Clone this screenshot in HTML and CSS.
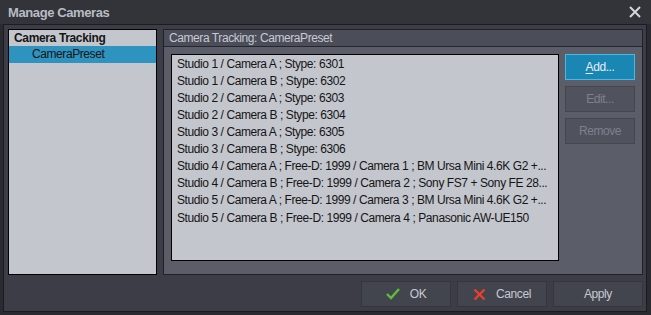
FILE: index.html
```html
<!DOCTYPE html>
<html>
<head>
<meta charset="utf-8">
<link rel="stylesheet" href="styles.css">
</head>
<body>
<div class="window">
  <div class="titlebar">
    <span class="title">Manage Cameras</span>
    <svg class="close" width="12" height="12" viewBox="0 0 12 12"><path d="M1 1 L11 11 M11 1 L1 11" stroke="#d4d5d8" stroke-width="2" fill="none"/></svg>
  </div>
  <div class="frame">
    <div class="main">
      <div class="tree">
        <div class="tree-root">Camera Tracking</div>
        <div class="tree-item selected">CameraPreset</div>
      </div>
      <div class="panel">
        <div class="panel-head">Camera Tracking: CameraPreset</div>
        <div class="panel-body">
          <div class="list">
            <div class="row">Studio 1 / Camera A ; Stype: 6301</div>
            <div class="row">Studio 1 / Camera B ; Stype: 6302</div>
            <div class="row">Studio 2 / Camera A ; Stype: 6303</div>
            <div class="row">Studio 2 / Camera B ; Stype: 6304</div>
            <div class="row">Studio 3 / Camera A ; Stype: 6305</div>
            <div class="row">Studio 3 / Camera B ; Stype: 6306</div>
            <div class="row">Studio 4 / Camera A ; Free-D: 1999 / Camera 1 ; BM Ursa Mini 4.6K G2 +...</div>
            <div class="row">Studio 4 / Camera B ; Free-D: 1999 / Camera 2 ; Sony FS7 + Sony FE 28...</div>
            <div class="row">Studio 5 / Camera A ; Free-D: 1999 / Camera 3 ; BM Ursa Mini 4.6K G2 +...</div>
            <div class="row last">Studio 5 / Camera B ; Free-D: 1999 / Camera 4 ; Panasonic AW-UE150</div>
          </div>
          <div class="side-buttons">
            <div class="btn btn-primary"><u>A</u>dd...</div>
            <div class="btn btn-disabled">Edit...</div>
            <div class="btn btn-disabled">Remove</div>
          </div>
        </div>
      </div>
    </div>
    <div class="footer">
      <div class="btn btn-foot">
        <svg class="ico" width="14" height="12" viewBox="0 0 14 12"><path d="M1 6 L5 10 L13 1" stroke="#5cbf3a" stroke-width="2.4" fill="none"/></svg>
        <span>OK</span>
      </div>
      <div class="btn btn-foot">
        <svg class="ico" width="13" height="13" viewBox="0 0 13 13"><path d="M1.5 1.5 L11.5 11.5 M11.5 1.5 L1.5 11.5" stroke="#e8402c" stroke-width="2.4" fill="none"/></svg>
        <span>Cancel</span>
      </div>
      <div class="btn btn-foot">Apply</div>
    </div>
  </div>
</div>
</body>
</html>
```
FILE: styles.css
```css
html, body {
  margin: 0;
  padding: 0;
}
body {
  width: 651px;
  height: 315px;
  background: #2a2b30;
  font-family: "Liberation Sans", Arial, sans-serif;
  font-size: 12px;
  letter-spacing: -0.42px;
  overflow: hidden;
}
.window {
  width: 651px;
  height: 315px;
}
.titlebar {
  height: 24px;
  background: #333439;
  display: flex;
  align-items: center;
  justify-content: space-between;
  padding: 0 10px 0 8px;
  box-sizing: border-box;
}
.title {
  font-weight: bold;
  font-size: 13px;
  color: #b8bcc4;
  letter-spacing: -0.4px;
}
.close {
  display: block;
  margin-top: -1px;
}
.frame {
  margin-left: 3px;
  width: 644px;
  height: 288px;
  box-sizing: border-box;
  border: 1px solid #1b1c20;
  background: #3c3d46;
  display: flex;
  flex-direction: column;
  padding: 4px 3px 4px 4px;
}
.main {
  display: flex;
  gap: 6px;
  height: 246px;
}
.tree {
  width: 149px;
  box-sizing: border-box;
  border: 1px solid #000;
  background: #c3c6cd;
  color: #151515;
}
.tree-root {
  height: 16px;
  line-height: 16px;
  font-weight: bold;
  padding-left: 5px;
  letter-spacing: -0.35px;
}
.tree-item {
  height: 17px;
  line-height: 17px;
  padding-left: 23px;
}
.selected {
  background: #2f93bf;
}
.panel {
  flex: 1;
  box-sizing: border-box;
  border: 1px solid #202127;
  background: #5b5d69;
  display: flex;
  flex-direction: column;
}
.panel-head {
  height: 16px;
  line-height: 16px;
  background: #4b4e59;
  border-bottom: 1px solid #26272d;
  color: #c6cad2;
  padding-left: 5px;
}
.panel-body {
  flex: 1;
  display: flex;
  gap: 6px;
  padding: 7px 7px 13px 7px;
}
.list {
  width: 388px;
  box-sizing: border-box;
  border: 1px solid #000;
  background: #c3c6cd;
  padding-top: 1px;
}
.row {
  height: 17px;
  line-height: 17px;
  padding-left: 5px;
  color: #151515;
  white-space: nowrap;
}
.row.last {
  margin-top: 1px;
}
.side-buttons {
  width: 70px;
  display: flex;
  flex-direction: column;
  gap: 6px;
}
.btn {
  height: 26px;
  box-sizing: border-box;
  display: flex;
  align-items: center;
  justify-content: center;
  font-size: 12px;
}
.btn-primary {
  background: #1a86b4;
  border: 1px solid #47b9e6;
  color: #e6edf2;
}
.btn-primary u {
  text-decoration-thickness: 1px;
  text-underline-offset: 2px;
}
.btn-disabled {
  background: #50535e;
  border: 1px solid #45474f;
  color: #7d818c;
}
.footer {
  display: flex;
  justify-content: flex-end;
  gap: 6px;
  margin-top: 6px;
}
.btn-foot {
  width: 90px;
  background: #43454e;
  border: 1px solid #34363c;
  color: #c6cad2;
  gap: 10px;
}
.ico {
  display: block;
}
```
